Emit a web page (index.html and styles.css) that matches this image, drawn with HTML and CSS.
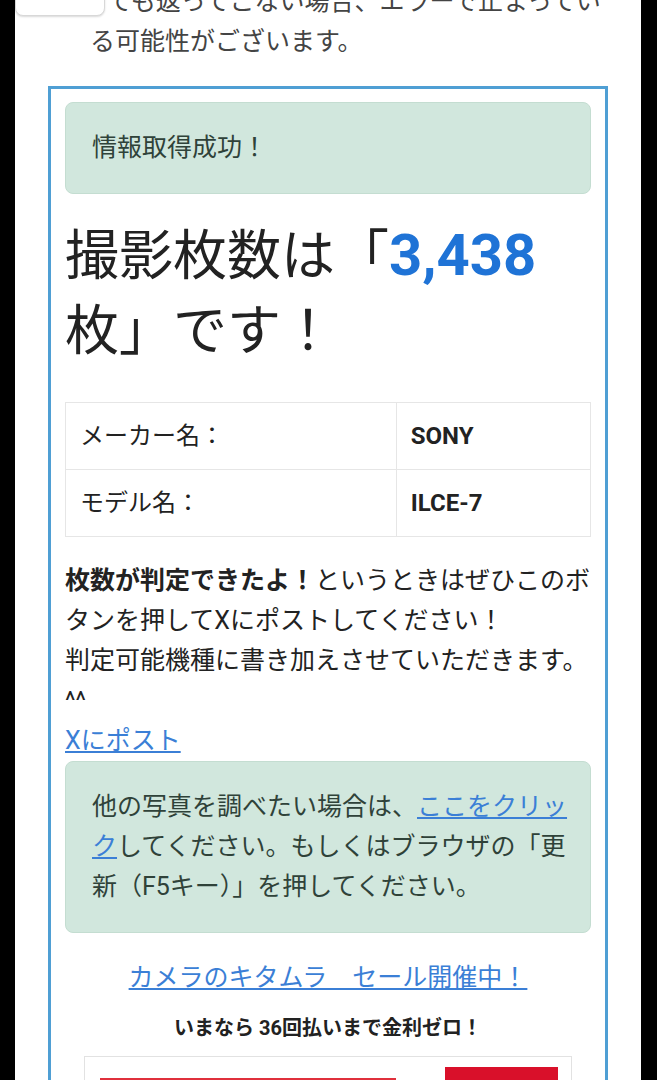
FILE: index.html
```html
<!DOCTYPE html>
<html lang="ja">
<head>
    <meta charset="UTF-8">
    <meta name="viewport" content="width=device-width, initial-scale=1.0">
    <title>撮影枚数チェッカー</title>
    <link rel="stylesheet" href="styles.css">
</head>
<body>

<div class="page">

    <!-- 注意書き -->
    <div class="notice">
        <span class="prev-btn"></span>
        ても返ってこない場合、エラーで止まっている可能性がございます。
    </div>

    <!-- 結果 -->
    <div class="result-box">
        <div class="alert">情報取得成功！</div>

        <h1 class="count">撮影枚数は「<span class="count-num">3,438</span>枚」です！</h1>

        <table class="info-table">
            <tr>
                <td class="label">メーカー名：</td>
                <td class="value">SONY</td>
            </tr>
            <tr>
                <td class="label">モデル名：</td>
                <td class="value">ILCE-7</td>
            </tr>
        </table>

        <p class="message"><b>枚数が判定できたよ！</b>というときはぜひこのボタンを押してXにポストしてください！<br>判定可能機種に書き加えさせていただきます。^^</p>
        <div class="post-link"><a href="#">Xにポスト</a></div>

        <div class="alert">他の写真を調べたい場合は、<a href="#">ここをクリック</a>してください。もしくはブラウザの「更新（F5キー）」を押してください。</div>

        <!-- 広告 -->
        <div class="ad">
            <a href="#" class="ad-title">カメラのキタムラ　セール開催中！</a>
            <p class="ad-sub">いまなら 36回払いまで金利ゼロ！</p>
            <div class="ad-banner">
                <div class="banner-bar"></div>
                <div class="banner-block"></div>
            </div>
        </div>
    </div>

</div>

</body>
</html>
```

FILE: styles.css
```css
/* 全体 */
html, body {
    margin: 0;
    padding: 0;
    background: #000;
}

body {
    font-family: Roboto, "Noto Sans CJK JP", sans-serif;
    color: #222;
}

.page {
    margin-left: 15px;
    width: 626px;
    min-height: 1200px;
    background: #fff;
}

a {
    color: #3b7fd6;
    text-decoration: underline;
}

/* 注意書き */
.notice {
    margin: -18px 0 0;
    padding: 0 26px 0 75px;
    font-size: 25px;
    line-height: 40px;
    color: #444;
}

.prev-btn {
    float: left;
    margin-left: -75px;
    margin-right: 2px;
    width: 88px;
    height: 32px;
    border: 1px solid #d8d8d8;
    border-radius: 0 0 8px 8px;
    box-shadow: 0 1px 2px rgba(0, 0, 0, 0.15);
    background: #fff;
}

/* 結果 */
.result-box {
    margin: 24px 0 0 33px;
    width: 560px;
    box-sizing: border-box;
    border: 3px solid #4f9fd4;
    padding: 13px 14px 0;
}

.alert {
    background: #d1e7dd;
    border: 1px solid #c4ddd1;
    border-radius: 8px;
    padding: 25px 22px 25px 26px;
    font-size: 25px;
    line-height: 40px;
    color: #2f4239;
}

.count {
    margin: 25px 0 0;
    font-size: 54px;
    line-height: 75px;
    font-weight: normal;
    color: #222;
}

.count-num {
    color: #1f73d6;
    font-size: 58px;
    line-height: 1;
    font-weight: bold;
}

.info-table {
    margin-top: 33px;
    width: 100%;
    border-collapse: collapse;
    font-size: 24px;
    line-height: 40px;
}

.info-table td {
    border: 1px solid #e6e6e6;
    padding: 13px 14px;
}

.info-table .label {
    width: 63%;
}

.info-table .value {
    font-weight: bold;
}

.message {
    margin: 24px 0 0;
    font-size: 25px;
    line-height: 40px;
    color: #222;
}

.post-link {
    font-size: 25px;
    line-height: 40px;
}

/* 広告 */
.ad {
    text-align: center;
    padding-top: 25px;
}

.ad-title {
    font-size: 25px;
    line-height: 40px;
}

.ad-sub {
    margin: 15px 0 0;
    font-size: 20px;
    line-height: 30px;
    font-weight: bold;
    color: #222;
}

.ad-banner {
    display: flex;
    justify-content: space-between;
    margin: 13px auto 0;
    width: 488px;
    height: 140px;
    box-sizing: border-box;
    border: 1px solid #e2e2e2;
    padding: 10px 13px 0 15px;
}

.banner-bar {
    margin-top: 11px;
    width: 296px;
    height: 60px;
    background: #8e1c22;
    border-top: 2px solid #e0303c;
}

.banner-block {
    width: 113px;
    height: 80px;
    background: #d9102a;
}
```
